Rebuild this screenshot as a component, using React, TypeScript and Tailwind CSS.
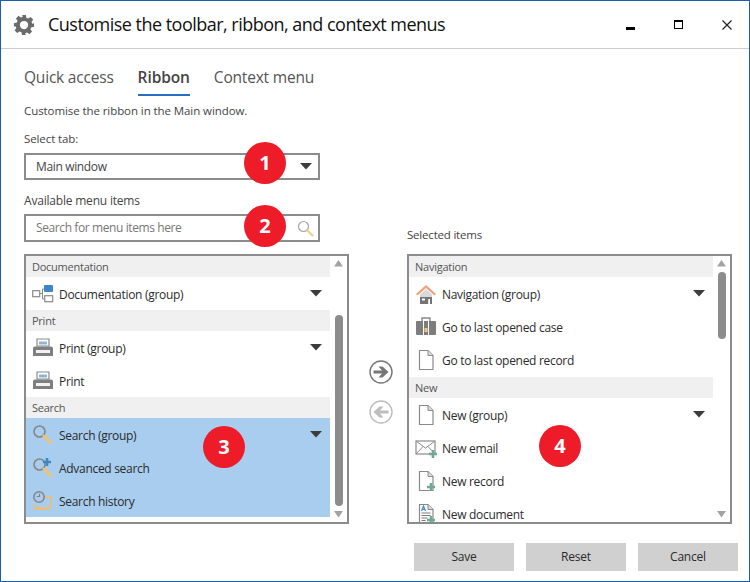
import React from "react";

function Caret() {
  return (
    <svg width="12" height="7" viewBox="0 0 12 7" className="shrink-0">
      <path d="M0 0H12L6 6.5Z" fill="#3c3c3c" />
    </svg>
  );
}

function Gear() {
  return (
    <svg width="22" height="22" viewBox="0 0 24 24">
      <path
        fill="#6b6b6b"
        fillRule="evenodd"
        d="M10 1h4l.6 3.2 1.9.8 2.7-1.8 2.8 2.8-1.8 2.7.8 1.9L23 10v4l-3.2.6-.8 1.9 1.8 2.7-2.8 2.8-2.7-1.8-1.9.8L13.8 23h-4l-.6-3.2-1.9-.8-2.7 1.8-2.8-2.8 1.8-2.7-.8-1.9L1 14v-4l3.2-.6.8-1.9L3.2 4.8 6 2l2.7 1.8 1.9-.8ZM12 7.5a4.5 4.5 0 1 0 0 9 4.5 4.5 0 0 0 0-9Z"
      />
    </svg>
  );
}

function Magnifier({ plus = false }: { plus?: boolean }) {
  return (
    <svg width="22" height="22" viewBox="0 0 22 22">
      <circle cx="7.5" cy="7.5" r="5.5" fill="none" stroke="#858585" strokeWidth="1.6" />
      <path d="M12 12l6.5 6.5" stroke="#f0c36e" strokeWidth="3" strokeLinecap="round" />
      {plus && <path d="M15 1v8M11 5h8" stroke="#3f86c4" strokeWidth="2.6" />}
    </svg>
  );
}

function History() {
  return (
    <svg width="22" height="22" viewBox="0 0 22 22">
      <path d="M12 7H19V18M19 18H3v-4M3 19h14" fill="none" stroke="#eec06a" strokeWidth="1.5" />
      <circle cx="7" cy="7" r="5.2" fill="none" stroke="#858585" strokeWidth="1.5" />
      <path d="M4.5 6.5H7.5V3.8" fill="none" stroke="#858585" strokeWidth="1.2" />
    </svg>
  );
}

function DocGroup() {
  return (
    <svg width="22" height="22" viewBox="0 0 22 22">
      <rect x="0.7" y="7.7" width="7" height="6" fill="#fff" stroke="#8a8a8a" strokeWidth="1.2" />
      <rect x="12" y="2" width="9" height="7" rx="1" fill="#3d85c6" />
      <rect x="12.7" y="12.7" width="8" height="6" fill="#fff" stroke="#8a8a8a" strokeWidth="1.2" />
      <path d="M8 10.5h2.5M10.5 6v10M10.5 6H12M10.5 16H12" stroke="#8a8a8a" fill="none" />
    </svg>
  );
}

function Printer() {
  return (
    <svg width="22" height="22" viewBox="0 0 22 22">
      <path d="M5 2h12v7H5Z" fill="#fff" stroke="#8a8a8a" strokeWidth="1.2" />
      <path d="M7 4.5h8v3H7Z" fill="#8fb3d6" />
      <path d="M1 11.5a2 2 0 0 1 2-2h16a2 2 0 0 1 2 2V19H1Z" fill="#7f7f7f" />
      <rect x="4" y="13" width="14" height="3" fill="#f2f2f2" />
    </svg>
  );
}

function House() {
  return (
    <svg width="22" height="22" viewBox="0 0 22 22">
      <path d="M1 11 11 2l10 9-1.5 1.5L11 5l-8.5 7.5Z" fill="#f0a27a" />
      <path d="M5 11.5 11 6l6 5.5V21H5Z" fill="#d9d9d9" />
      <path d="M5 14h8v7H5Z" fill="#747474" />
      <path d="M7 15.5h3v2H7Z" fill="#fff" />
      <path d="M13 14h4v7h-4Z" fill="#747474" />
      <path d="M13.2 16h1.8v5h-1.8Z" fill="#fff" />
    </svg>
  );
}

function Case() {
  return (
    <svg width="22" height="22" viewBox="0 0 22 22">
      <path d="M7 5V2h8v3" fill="none" stroke="#8a8a8a" strokeWidth="1.4" />
      <rect x="1" y="5" width="20" height="14" rx="1" fill="#7d7d7d" />
      <rect x="8" y="5" width="1" height="14" fill="#fff" />
      <rect x="13" y="5" width="1" height="14" fill="#fff" />
      <rect x="9.5" y="12" width="3" height="4" fill="#f2c878" />
    </svg>
  );
}

function Plus() {
  return <path d="M16 13v8M12 17h8" stroke="#6fa893" strokeWidth="2.6" />;
}

function Page({ plus = false, lines = false }: { plus?: boolean; lines?: boolean }) {
  return (
    <svg width="22" height="22" viewBox="0 0 22 22">
      <path d="M4.5 1.5H13L18 6.5V20.5H4.5Z" fill="#fff" stroke="#8a8a8a" strokeWidth="1.2" />
      <path d="M13 1.5V6.5H18" fill="#ddd" stroke="#8a8a8a" strokeWidth="1" />
      {lines && (
        <>
          <path d="M6.5 8 8.5 3l2 5M7.3 6.3h2.4" fill="none" stroke="#4a8ccb" strokeWidth="1.2" />
          <path d="M6.5 10h9M6.5 12.5h9M6.5 15h6M6.5 17.5h4" stroke="#7a7a7a" />
        </>
      )}
      {plus && <Plus />}
    </svg>
  );
}

function Mail() {
  return (
    <svg width="24" height="22" viewBox="0 0 24 22">
      <rect x="1" y="4" width="19" height="13" fill="#fff" stroke="#8a8a8a" strokeWidth="1.2" />
      <path d="M1 4l9.5 7L20 4M1 17l7-7.5M20 17l-7-7.5" fill="none" stroke="#8a8a8a" />
      <path d="M18 13v8M14 17h8" stroke="#6fa893" strokeWidth="2.6" />
    </svg>
  );
}

function Header({ children }: { children: React.ReactNode }) {
  return (
    <div className="h-[21px] bg-[#f0f0f0] pl-[6px] text-[11px] leading-[21px] text-[#555555] tracking-[-0.25px] shrink-0">
      {children}
    </div>
  );
}

function Row({
  icon,
  label,
  caret = false,
  selected = false,
  tall = false,
}: {
  icon: React.ReactNode;
  label: string;
  caret?: boolean;
  selected?: boolean;
  tall?: boolean;
}) {
  return (
    <div
      className={`flex items-center pl-[6px] pr-[8px] shrink-0 ${tall ? "h-[34px]" : "h-[33px]"} ${
        selected ? "bg-[#a8cdee]" : ""
      }`}
    >
      <span className="w-[27px] flex items-center shrink-0">{icon}</span>
      <span className="flex-1 pt-[2px] text-[12px] tracking-[-0.3px] text-[#2b2b2b] whitespace-nowrap">{label}</span>
      {caret && <Caret />}
    </div>
  );
}

function ScrollBar({ thumbTop, thumbHeight }: { thumbTop: string; thumbHeight: string }) {
  return (
    <div className="w-[17px] shrink-0 flex flex-col items-center">
      <svg width="10" height="7" viewBox="0 0 10 7" className="mt-[4px] shrink-0">
        <path d="M0 6.5H9L4.5 0Z" fill="#a3a3a3" />
      </svg>
      <div className={`w-[8px] rounded-[4px] bg-[#8c8c8c] ${thumbTop} ${thumbHeight}`} />
      <div className="flex-1" />
      <svg width="10" height="7" viewBox="0 0 10 7" className="mb-[4px] shrink-0">
        <path d="M0 0H9L4.5 6.5Z" fill="#a3a3a3" />
      </svg>
    </div>
  );
}

function Badge({ n, pos }: { n: string; pos: string }) {
  return (
    <div
      className={`absolute ${pos} w-[42px] h-[42px] rounded-full bg-[#ed1c28] text-white flex items-center justify-center text-[20px] font-bold`}
    >
      {n}
    </div>
  );
}

function Btn({ label }: { label: string }) {
  return (
    <div className="w-[100px] h-[28px] bg-[#d0d0d0] flex items-center justify-center text-[12px] tracking-[-0.2px] text-[#2b2b2b]">
      {label}
    </div>
  );
}

export default function App() {
  return (
    <div
      className="relative w-[750px] h-[582px] bg-white border border-[#1a5fb0] overflow-hidden flex flex-col"
      style={{ fontFamily: '"Open Sans", "Noto Sans", sans-serif' }}
    >
      <div className="h-[48px] shrink-0 border-b border-[#cccccc] flex items-center pl-[12px] pr-[16px]">
        <Gear />
        <span className="ml-[13px] text-[18px] tracking-[-0.52px] text-[#111111] flex-1 whitespace-nowrap">
          Customise the toolbar, ribbon, and context menus
        </span>
        <div className="w-[9px] h-[3px] bg-black mt-[7px] mr-[39px]" />
        <div className="w-[9px] h-[9px] border border-black border-t-[2px] mr-[39px]" />
        <svg width="10" height="10" viewBox="0 0 10 10" className="mr-[1px]">
          <path d="M.5.5l9 9M9.5.5l-9 9" stroke="#222" strokeWidth="1.2" />
        </svg>
      </div>

      <div className="flex-1 flex flex-col pl-[23px] pr-[11px] pb-[10px]">
        <div className="flex items-start h-[47px] pt-[17px] gap-[24px] text-[#555555] text-[15.5px] tracking-[-0.2px] leading-[22px]">
          <span>Quick access</span>
          <span className="font-semibold tracking-[-0.1px] text-[#444444] h-[30px] border-b-2 border-[#2a6ec0]">Ribbon</span>
          <span>Context menu</span>
        </div>

        <div className="mt-[7px] text-[11.5px] leading-[16px] tracking-[-0.08px] text-[#444444]">
          Customise the ribbon in the Main window.
        </div>

        <div className="flex flex-1 mt-[12px]">
          <div className="w-[325px] flex flex-col shrink-0">
            <div className="text-[11.5px] leading-[16px] tracking-[-0.1px] text-[#444444] h-[16px]">Select tab:</div>
            <div className="mt-[6px] w-[296px] h-[27px] border-2 border-[#8c8c8c] flex items-center pl-[10px] pr-[6px]">
              <span className="flex-1 text-[12px] tracking-[-0.35px] text-[#444444]">Main window</span>
              <Caret />
            </div>
            <div className="mt-[13px] text-[12px] leading-[16px] tracking-[-0.2px] text-[#444444] h-[16px]">
              Available menu items
            </div>
            <div className="mt-[5px] w-[296px] h-[28px] border-2 border-[#8c8c8c] flex items-center pl-[10px] pr-[4px]">
              <span className="flex-1 text-[12px] tracking-[-0.4px] text-[#777777]">Search for menu items here</span>
              <svg width="17" height="17" viewBox="0 0 17 17">
                <circle cx="6.5" cy="6.5" r="5" fill="none" stroke="#a5a5a5" strokeWidth="1.2" />
                <path d="M10.5 10.5l5 5" stroke="#f0cf90" strokeWidth="2.4" strokeLinecap="round" />
              </svg>
            </div>

            <div className="mt-[12px] h-[270px] border-2 border-[#8c8c8c] flex overflow-hidden">
              <div className="flex-1 flex flex-col min-w-0">
                <Header>Documentation</Header>
                <Row icon={<DocGroup />} label="Documentation (group)" caret />
                <Header>Print</Header>
                <Row icon={<Printer />} label="Print (group)" caret />
                <Row icon={<Printer />} label="Print" />
                <Header>Search</Header>
                <Row icon={<Magnifier />} label="Search (group)" caret selected />
                <Row icon={<Magnifier plus />} label="Advanced search" selected />
                <Row icon={<History />} label="Search history" selected />
              </div>
              <ScrollBar thumbTop="mt-[48px]" thumbHeight="h-[191px]" />
            </div>
          </div>

          <div className="w-[58px] shrink-0 flex flex-col items-center pl-[6px] pt-[229px] gap-[16px]">
            <svg width="24" height="24" viewBox="0 0 24 24">
              <circle cx="12" cy="12" r="11" fill="#fff" stroke="#777" strokeWidth="1.4" />
              <path d="M4.5 10.5H13L9.5 6.5H13.5L19.5 12l-6 5.5H9.5l3.5-4H4.5Z" fill="#777" />
            </svg>
            <svg width="24" height="24" viewBox="0 0 24 24">
              <circle cx="12" cy="12" r="11" fill="#fff" stroke="#bdbdbd" strokeWidth="1.4" />
              <path d="M19.5 10.5H11L14.5 6.5H10.5L4.5 12l6 5.5h4l-3.5-4h8.5Z" fill="#bdbdbd" />
            </svg>
          </div>

          <div className="w-[325px] shrink-0 flex flex-col">
            <div className="mt-[96px] text-[11.5px] leading-[16px] tracking-[-0.2px] text-[#444444] h-[16px]">
              Selected items
            </div>
            <div className="mt-[11px] h-[270px] border-2 border-[#8c8c8c] flex overflow-hidden">
              <div className="flex-1 flex flex-col min-w-0 overflow-hidden">
                <Header>Navigation</Header>
                <Row icon={<House />} label="Navigation (group)" caret />
                <Row icon={<Case />} label="Go to last opened case" />
                <Row icon={<Page />} label="Go to last opened record" tall />
                <Header>New</Header>
                <Row icon={<Page />} label="New (group)" caret />
                <Row icon={<Mail />} label="New email" />
                <Row icon={<Page plus />} label="New record" />
                <Row icon={<Page plus lines />} label="New document" />
              </div>
              <ScrollBar thumbTop="mt-[5px]" thumbHeight="h-[67px]" />
            </div>
          </div>
        </div>

        <div className="flex justify-end gap-[12px]">
          <Btn label="Save" />
          <Btn label="Reset" />
          <Btn label="Cancel" />
        </div>
      </div>

      <Badge n="1" pos="left-[243px] top-[141px]" />
      <Badge n="2" pos="left-[243px] top-[204px]" />
      <Badge n="3" pos="left-[202px] top-[425px]" />
      <Badge n="4" pos="left-[538px] top-[424px]" />
    </div>
  );
}
